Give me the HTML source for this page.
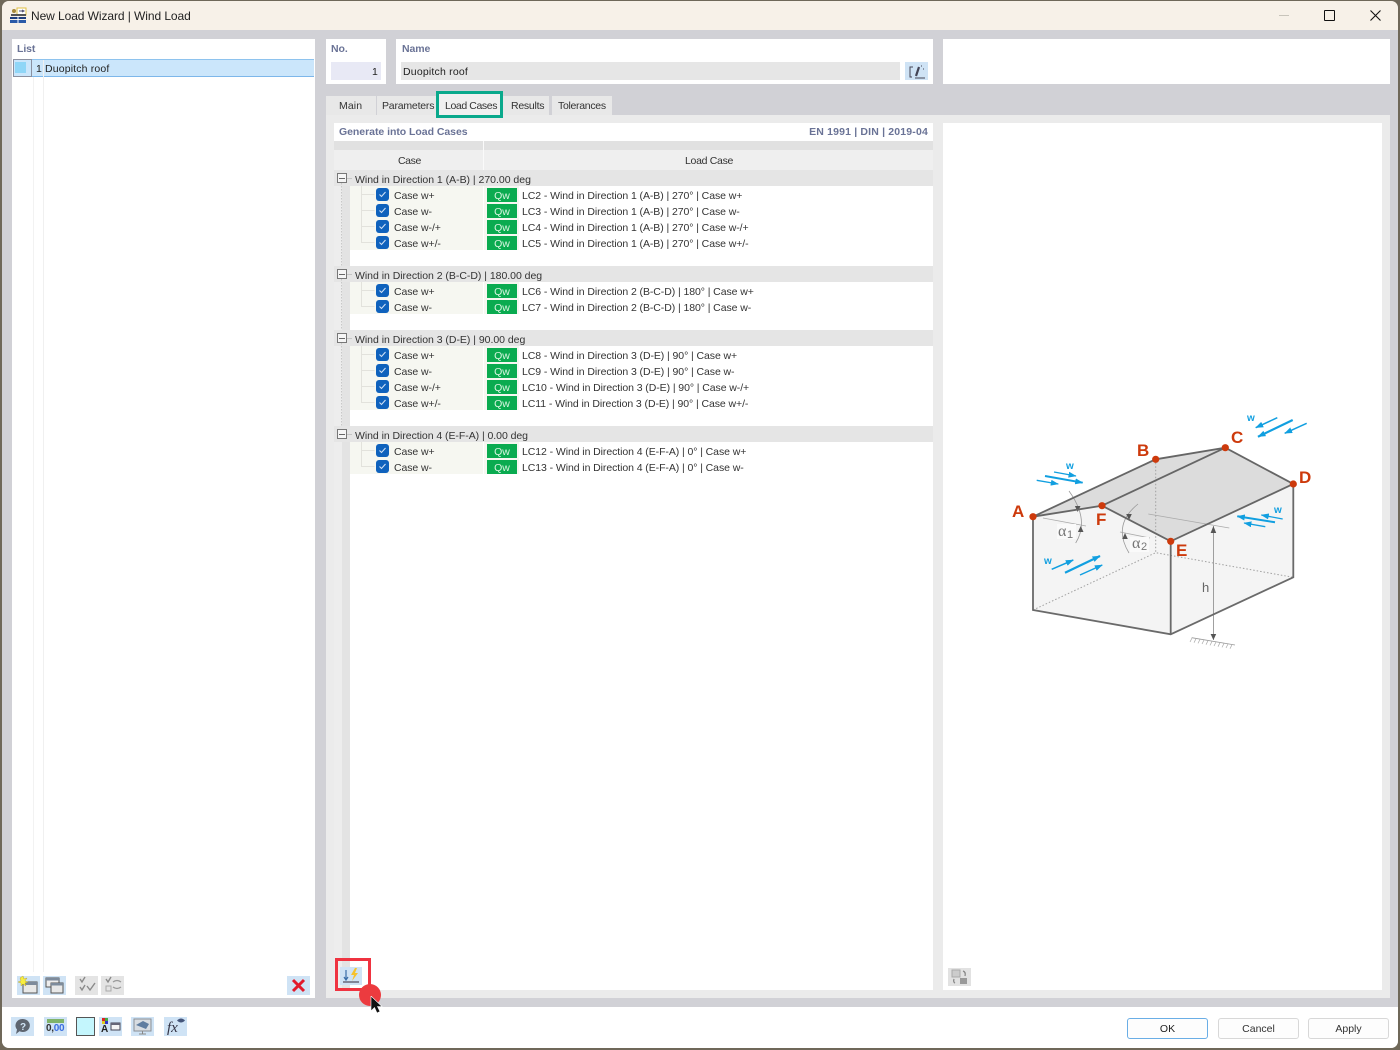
<!DOCTYPE html>
<html><head><meta charset="utf-8"><style>
html,body{margin:0;padding:0;background:#6f6859;}
body{width:1400px;height:1050px;position:relative;overflow:hidden;font-family:"Liberation Sans",sans-serif;font-size:10.5px;color:#333;}
.a{position:absolute;}
.t{position:absolute;white-space:nowrap;line-height:14px;letter-spacing:-.08px;}
.b{font-weight:bold;color:#6a7396;}
.ib{position:absolute;width:23px;height:19px;background:#cfe3f5;}
.ig{position:absolute;width:23px;height:19px;background:#e4e4e4;}
.cb{position:absolute;left:376px;width:13px;height:13.5px;margin-top:-.5px;background:#0f62bd;border-radius:3px;}
.qw{position:absolute;left:487px;width:30px;height:14px;margin-top:-.5px;background:#0aab50;color:#d8f5e0;text-align:center;line-height:16px;font-size:10.5px;}
.rowbg{position:absolute;left:350px;width:133px;background:#f6f7f1;}
.rowbg2{position:absolute;left:484px;width:35px;background:#f6f7f1;}
.gh{position:absolute;left:334px;width:599px;height:16px;background:#e5e5e5;}
.pm{position:absolute;left:337px;width:8px;height:8px;border:1px solid #777;background:#f5f5f5;}
.pm:after{content:"";position:absolute;left:1px;top:3.500px;width:6px;height:1px;background:#666;}
.btn{position:absolute;top:1018px;width:79px;height:19px;border:1px solid #d8d8d8;border-radius:3px;background:#fdfdfd;text-align:center;line-height:21px;font-size:10.5px;}
</style></head><body>
<div class="a" style="left:2px;top:1px;width:1396px;height:1047px;background:#d1d1d6;border-radius:7px;overflow:hidden">
<div class="a" style="left:0;top:0;width:1396px;height:29px;background:#f7f1e8"></div>
<div class="a" style="left:0;top:1006px;width:1396px;height:41px;background:#fff"></div>
</div>
<svg class="a" style="left:10px;top:7px" width="17" height="16" viewBox="0 0 17 16"><rect x="7" y="1" width="9" height="7" fill="#fff" stroke="#e0c040"/><path d="M9 4h5M12 3l2 1-2 1" stroke="#557" fill="none"/><circle cx="4" cy="4" r="2" fill="#a88a3a"/><path d="M1 8h15" stroke="#555" stroke-width="2"/><rect x="0" y="10" width="16" height="2" fill="#1e3f80"/><rect x="0" y="13" width="16" height="3" fill="#2a5aa8"/><path d="M8 9v7" stroke="#fff"/></svg>
<div class="t" style="left:31px;top:9px;font-size:12px;color:#222;letter-spacing:-.08px">New Load Wizard | Wind Load</div>
<div class="a" style="left:1279px;top:15px;width:10px;height:1px;background:#c8c4ba"></div>
<div class="a" style="left:1324px;top:10px;width:9px;height:9px;border:1px solid #111;border-radius:1px"></div>
<svg class="a" style="left:1370px;top:10px" width="11" height="11"><path d="M.5 .5l10 10M10.500 .5l-10 10" stroke="#111" stroke-width="1.100"/></svg>

<!-- List -->
<div class="a" style="left:12px;top:39px;width:303px;height:959px;background:#fff"></div>
<div class="t b" style="left:17px;top:42px">List</div>
<div class="a" style="left:13px;top:59px;width:301px;height:18px;background:#cbe6fb;border-top:1px solid #8ec3ee;border-bottom:1px solid #7db7ea;box-sizing:border-box"></div>
<div class="a" style="left:13px;top:59px;width:19px;height:18px;border:1px solid #8a90a0;box-sizing:border-box"></div>
<div class="a" style="left:15px;top:62px;width:11px;height:11px;background:#8fd6f7"></div>
<div class="a" style="left:33px;top:77px;width:1px;height:895px;background:#f2f2f2"></div>
<div class="a" style="left:43px;top:60px;width:1px;height:912px;background:#f0f0f0"></div>
<div class="t" style="left:36px;top:62px;color:#222">1</div>
<div class="t" style="left:45px;top:62px;color:#222;letter-spacing:.15px">Duopitch roof</div>
<div class="ib" style="left:17px;top:976px"></div>
<svg class="a" style="left:17px;top:975px" width="23" height="20"><rect x="6" y="7" width="14" height="11" fill="#e8e8e8" stroke="#555"/><rect x="6" y="7" width="14" height="3" fill="#7d8b9c"/><path d="M6 1l1 3 3-1-2 3 3 1-3 1 1 3-3-2-2 2 0-3-3-1 3-1-1-3z" fill="#f8ee40" stroke="#b39b20" stroke-width=".4"/></svg>
<div class="ib" style="left:43px;top:976px"></div>
<svg class="a" style="left:43px;top:975px" width="23" height="20"><rect x="3" y="3" width="13" height="9" fill="#eee" stroke="#555"/><rect x="3" y="3" width="13" height="2.500" fill="#7d8b9c"/><rect x="8" y="8" width="12" height="10" fill="#e8e8e8" stroke="#555"/><rect x="8" y="8" width="12" height="2.500" fill="#7d8b9c"/></svg>
<div class="ig" style="left:75px;top:976px"></div>
<svg class="a" style="left:75px;top:975px" width="23" height="20"><path d="M5 4l2 3 3-5M5 12l2 3 3-5M12 11l3 4 5-7" stroke="#8a8a8a" stroke-width="1.400" fill="none"/></svg>
<div class="ig" style="left:101px;top:976px"></div>
<svg class="a" style="left:101px;top:975px" width="23" height="20"><path d="M5 4l2 3 3-5" stroke="#8a8a8a" stroke-width="1.400" fill="none"/><rect x="5" y="11" width="5" height="5" fill="none" stroke="#aaa"/><path d="M12 7q4-3 8 0M20 12q-4 3-8 0" stroke="#999" stroke-width="1.300" fill="none"/></svg>
<div class="ib" style="left:287px;top:976px"></div>
<svg class="a" style="left:287px;top:975px" width="23" height="20"><path d="M6 5l11 11M17 5L6 16" stroke="#e21a2c" stroke-width="3"/></svg>

<!-- No / Name -->
<div class="a" style="left:326px;top:39px;width:60px;height:45px;background:#fff"></div>
<div class="t b" style="left:331px;top:42px">No.</div>
<div class="a" style="left:331px;top:62px;width:50px;height:18px;background:#e8e9f5"></div>
<div class="t" style="left:372px;top:65px;color:#222">1</div>
<div class="a" style="left:396px;top:39px;width:537px;height:45px;background:#fff"></div>
<div class="t b" style="left:402px;top:42px">Name</div>
<div class="a" style="left:401px;top:62px;width:499px;height:18px;background:#e6e6e6"></div>
<div class="t" style="left:403px;top:65px;color:#222;letter-spacing:.2px">Duopitch roof</div>
<div class="a" style="left:905px;top:62px;width:23px;height:18px;background:#cfe3f5"></div>
<svg class="a" style="left:905px;top:62px" width="23" height="18"><path d="M8 5H5v10h2M10 16h10" stroke="#445" fill="none"/><path d="M11 14l3-9" stroke="#445" stroke-width="2.200"/><path d="M16 4h1M18 7h1" stroke="#445"/></svg>
<div class="a" style="left:943px;top:39px;width:447px;height:45px;background:#fff"></div>

<!-- Tabs -->
<div class="a" style="left:326px;top:96px;width:50px;height:19px;background:#e8e8e8"></div>
<div class="t" style="left:339px;top:99px;letter-spacing:.1px">Main</div>
<div class="a" style="left:377px;top:96px;width:59px;height:19px;background:#e8e8e8"></div>
<div class="t" style="left:382px;top:99px;letter-spacing:-.2px">Parameters</div>
<div class="a" style="left:503px;top:96px;width:46px;height:19px;background:#e8e8e8"></div>
<div class="t" style="left:511px;top:99px;letter-spacing:-.25px">Results</div>
<div class="a" style="left:552px;top:96px;width:60px;height:19px;background:#e8e8e8"></div>
<div class="t" style="left:558px;top:99px;letter-spacing:-.3px">Tolerances</div>
<div class="a" style="left:326px;top:115px;width:1064px;height:883px;background:#ebebeb"></div>
<div class="a" style="left:436px;top:91px;width:61px;height:21px;border:3px solid #0aa98c;background:#f0f0f0"></div>
<div class="t" style="left:445px;top:99px;letter-spacing:-.4px">Load Cases</div>

<!-- Panels -->
<div class="a" style="left:334px;top:123px;width:599px;height:867px;background:#fff"></div>
<div class="a" style="left:943px;top:123px;width:439px;height:867px;background:#fff"></div>
<div class="t b" style="left:339px;top:125px;letter-spacing:-.04px">Generate into Load Cases</div>
<div class="t b" style="right:472px;top:125px;letter-spacing:.17px">EN 1991 | DIN | 2019-04</div>
<div class="a" style="left:334px;top:141px;width:599px;height:9px;background:#e1e1e1"></div>
<div class="a" style="left:334px;top:150px;width:599px;height:20px;background:#efefef"></div>
<div class="a" style="left:483px;top:141px;width:1px;height:29px;background:#fafafa"></div>
<div class="t" style="left:398px;top:154px;letter-spacing:-.4px">Case</div>
<div class="t" style="left:685px;top:154px;letter-spacing:-.3px">Load Case</div>
<div class="a" style="left:334px;top:170px;width:8px;height:820px;background:#ededed"></div>
<div class="a" style="left:342px;top:170px;width:8px;height:820px;background:#e3e3e3"></div>

<div class="gh" style="top:170px"></div><div class="gh" style="top:266px"></div><div class="gh" style="top:330px"></div><div class="gh" style="top:426px"></div>
<svg class="a" style="left:334px;top:170px" width="20" height="280"><path d="M7.500 13v83M7.500 109v51M7.500 173v83" stroke="#c8c8c8" stroke-dasharray="1.500 1.500" fill="none"/><path d="M12 8.500h6M12 104.500h6M12 168.500h6M12 264.500h6" stroke="#c4c4c4"/></svg>
<div class="pm" style="top:173px"></div><div class="pm" style="top:269px"></div><div class="pm" style="top:333px"></div><div class="pm" style="top:429px"></div>
<div class="t" style="left:355px;top:173px;letter-spacing:-.02px">Wind in Direction 1 (A-B) | 270.00 deg</div>
<div class="t" style="left:355px;top:269px;letter-spacing:-.03px">Wind in Direction 2 (B-C-D) | 180.00 deg</div>
<div class="t" style="left:355px;top:333px;letter-spacing:-.03px">Wind in Direction 3 (D-E) | 90.00 deg</div>
<div class="t" style="left:355px;top:429px;letter-spacing:-.05px">Wind in Direction 4 (E-F-A) | 0.00 deg</div>

<div class="rowbg" style="top:186px;height:64px"></div><div class="rowbg2" style="top:186px;height:64px"></div>
<div class="rowbg" style="top:282px;height:32px"></div><div class="rowbg2" style="top:282px;height:32px"></div>
<div class="rowbg" style="top:346px;height:64px"></div><div class="rowbg2" style="top:346px;height:64px"></div>
<div class="rowbg" style="top:442px;height:32px"></div><div class="rowbg2" style="top:442px;height:32px"></div>
<svg class="a" style="left:350px;top:180px" width="30" height="300"><path d="M11.500 6v57M11.500 14.500h13M11.500 30.500h13M11.500 46.500h13M11.500 62.500h13M11.500 102v25M11.500 110.500h13M11.500 126.500h13M11.500 166v57M11.500 174.500h13M11.500 190.500h13M11.500 206.500h13M11.500 222.500h13M11.500 262v25M11.500 270.500h13M11.500 286.500h13" stroke="#e2e2dc" fill="none"/></svg>

<div class="cb" style="top:188px"></div><div class="t" style="left:394px;top:189px">Case w+</div><div class="qw" style="top:188px">Qw</div><div class="t" style="left:522px;top:189px">LC2 - Wind in Direction 1 (A-B) | 270° | Case w+</div>
<div class="cb" style="top:204px"></div><div class="t" style="left:394px;top:205px">Case w-</div><div class="qw" style="top:204px">Qw</div><div class="t" style="left:522px;top:205px">LC3 - Wind in Direction 1 (A-B) | 270° | Case w-</div>
<div class="cb" style="top:220px"></div><div class="t" style="left:394px;top:221px">Case w-/+</div><div class="qw" style="top:220px">Qw</div><div class="t" style="left:522px;top:221px">LC4 - Wind in Direction 1 (A-B) | 270° | Case w-/+</div>
<div class="cb" style="top:236px"></div><div class="t" style="left:394px;top:237px">Case w+/-</div><div class="qw" style="top:236px">Qw</div><div class="t" style="left:522px;top:237px">LC5 - Wind in Direction 1 (A-B) | 270° | Case w+/-</div>
<div class="cb" style="top:284px"></div><div class="t" style="left:394px;top:285px">Case w+</div><div class="qw" style="top:284px">Qw</div><div class="t" style="left:522px;top:285px">LC6 - Wind in Direction 2 (B-C-D) | 180° | Case w+</div>
<div class="cb" style="top:300px"></div><div class="t" style="left:394px;top:301px">Case w-</div><div class="qw" style="top:300px">Qw</div><div class="t" style="left:522px;top:301px">LC7 - Wind in Direction 2 (B-C-D) | 180° | Case w-</div>
<div class="cb" style="top:348px"></div><div class="t" style="left:394px;top:349px">Case w+</div><div class="qw" style="top:348px">Qw</div><div class="t" style="left:522px;top:349px">LC8 - Wind in Direction 3 (D-E) | 90° | Case w+</div>
<div class="cb" style="top:364px"></div><div class="t" style="left:394px;top:365px">Case w-</div><div class="qw" style="top:364px">Qw</div><div class="t" style="left:522px;top:365px">LC9 - Wind in Direction 3 (D-E) | 90° | Case w-</div>
<div class="cb" style="top:380px"></div><div class="t" style="left:394px;top:381px">Case w-/+</div><div class="qw" style="top:380px">Qw</div><div class="t" style="left:522px;top:381px">LC10 - Wind in Direction 3 (D-E) | 90° | Case w-/+</div>
<div class="cb" style="top:396px"></div><div class="t" style="left:394px;top:397px">Case w+/-</div><div class="qw" style="top:396px">Qw</div><div class="t" style="left:522px;top:397px">LC11 - Wind in Direction 3 (D-E) | 90° | Case w+/-</div>
<div class="cb" style="top:444px"></div><div class="t" style="left:394px;top:445px">Case w+</div><div class="qw" style="top:444px">Qw</div><div class="t" style="left:522px;top:445px">LC12 - Wind in Direction 4 (E-F-A) | 0° | Case w+</div>
<div class="cb" style="top:460px"></div><div class="t" style="left:394px;top:461px">Case w-</div><div class="qw" style="top:460px">Qw</div><div class="t" style="left:522px;top:461px">LC13 - Wind in Direction 4 (E-F-A) | 0° | Case w-</div>
<svg class="a" style="left:376px;top:188px" width="13" height="290" fill="none" stroke="#cfe0f5" stroke-width="1.100"><path d="M3.500 6.500l2 2 4-4.500M3.500 22.500l2 2 4-4.500M3.500 38.500l2 2 4-4.500M3.500 54.500l2 2 4-4.500M3.500 102.500l2 2 4-4.500M3.500 118.500l2 2 4-4.500M3.500 166.500l2 2 4-4.500M3.500 182.500l2 2 4-4.500M3.500 198.500l2 2 4-4.500M3.500 214.500l2 2 4-4.500M3.500 262.500l2 2 4-4.500M3.500 278.500l2 2 4-4.500"/></svg>

<!-- Diagram -->
<svg class="a" style="left:0;top:0" width="1400" height="1050" font-family="Liberation Sans,sans-serif">
<defs><marker id="ah" markerUnits="userSpaceOnUse" markerWidth="8" markerHeight="6" refX="7.500" refY="3" orient="auto"><path d="M0 0L8 3L0 6z" fill="#119fe0"/></marker></defs>
<path d="M1033 516.700L1102 505.700L1170.700 541.300V634.300L1033 610Z" fill="#f4f4f4"/>
<path d="M1170.700 541.300L1293.300 484V577.300L1170.700 634.300Z" fill="#f4f4f4"/>
<path d="M1033 516.700L1155.700 459.300L1225.300 447.700L1102 505.700Z" fill="#dcdcdc"/>
<path d="M1102 505.700L1225.300 447.700L1293.300 484L1170.700 541.300Z" fill="#dcdcdc"/>
<path d="M1155.700 459.300V552.700M1033 610L1155.700 552.700L1293.300 577.300" stroke="#a0a0a0" stroke-dasharray="1.500 2" fill="none"/>
<path d="M1043 518l43 8M1120 532l30 6M1148.300 514l81 14" stroke="#aaa" fill="none" stroke-width=".8"/>
<rect x="1057" y="524" width="19" height="15" fill="#fafafa"/><rect x="1130" y="537" width="19" height="15" fill="#fafafa"/>
<path d="M1069 491Q1090 520 1075.700 543M1138 504Q1112 525 1129 553" stroke="#999" fill="none" stroke-width=".8"/>
<path d="M1213.400 526V640" stroke="#888" stroke-width=".8"/>
<path d="M1213.400 526l-2.800 7h5.600zM1213.400 640l-2.800-6h5.600zM1077.700 512l-2.800-6h5.600zM1080.700 526l-2.800 6h5.600zM1129 520l-2.800-6h5.600zM1125 533l-2.800 6h5.600z" fill="#555"/>
<path d="M1191.700 637.700L1235 645" stroke="#999" stroke-width=".8"/><path d="M1192 638l-2 4M1196 638.700l-2 4M1200 639.400l-2 4M1204 640l-2 4M1208 640.700l-2 4M1212 641.400l-2 4M1216 642l-2 4M1220 642.700l-2 4M1224 643.400l-2 4M1228 644l-2 4M1232 644.700l-2 4" stroke="#aaa" stroke-width=".7"/>
<path d="M1033 516.700V610L1170.700 634.300L1293.300 577.300V484M1170.700 541.300V634.300" stroke="#6a6a6a" stroke-width="1.800" fill="none"/>
<path d="M1033 516.700L1155.700 459.300L1225.300 447.700L1293.300 484L1170.700 541.300L1102 505.700L1033 516.700M1102 505.700L1225.300 447.700" stroke="#666" stroke-width="1.800" fill="none"/>
<g fill="#cd3a0c"><circle cx="1033" cy="516.700" r="3.600"/><circle cx="1155.700" cy="459.300" r="3.600"/><circle cx="1225.300" cy="447.700" r="3.600"/><circle cx="1293.300" cy="484" r="3.600"/><circle cx="1170.700" cy="541.300" r="3.600"/><circle cx="1102" cy="505.700" r="3.600"/></g>
<g fill="#cd3a0c" font-size="17" font-weight="bold"><text x="1012" y="517">A</text><text x="1137" y="456">B</text><text x="1231" y="443">C</text><text x="1299" y="483">D</text><text x="1176" y="556">E</text><text x="1096" y="525">F</text></g>
<g fill="#777" font-family="Liberation Serif,serif" font-size="16"><text x="1058" y="536">α</text><text x="1132" y="548">α</text></g>
<g fill="#777" font-size="11"><text x="1067" y="538">1</text><text x="1141" y="550">2</text></g>
<text x="1202" y="592" fill="#666" font-size="13">h</text>
<g fill="#119fe0" font-size="10" font-weight="bold"><text x="1066" y="469">w</text><text x="1247" y="421">w</text><text x="1274" y="513">w</text><text x="1044" y="564">w</text></g>
<g stroke="#119fe0" fill="none">
<path stroke-width="1.300" marker-end="url(#ah)" d="M1054 472L1076 476"/>
<path stroke-width="2" marker-end="url(#ah)" d="M1045 476L1082.700 482.700"/>
<path stroke-width="1.300" marker-end="url(#ah)" d="M1036.700 480.300L1058.300 484"/>
<path stroke-width="1.500" marker-end="url(#ah)" d="M1277.300 417.700L1255.700 427.700"/>
<path stroke-width="2.200" marker-end="url(#ah)" d="M1292.700 420L1258 436.700"/>
<path stroke-width="1.500" marker-end="url(#ah)" d="M1306.700 423.300L1284.700 433.300"/>
<path stroke-width="1.300" marker-end="url(#ah)" d="M1282.700 519L1261.300 515"/>
<path stroke-width="2" marker-end="url(#ah)" d="M1275 522.300L1237.300 516.300"/>
<path stroke-width="1.300" marker-end="url(#ah)" d="M1265.300 526.700L1244 523"/>
<path stroke-width="1.500" marker-end="url(#ah)" d="M1051.700 569.300L1073.300 560"/>
<path stroke-width="2.200" marker-end="url(#ah)" d="M1065 572.700L1100 556"/>
<path stroke-width="1.500" marker-end="url(#ah)" d="M1080 575L1102.300 565"/>
</g>
</svg>

<div class="a" style="left:948px;top:968px;width:23px;height:18px;background:#e2e2e2"></div>
<svg class="a" style="left:948px;top:968px" width="23" height="18"><rect x="4" y="2" width="8" height="7" fill="#ccc" stroke="#aaa"/><rect x="12" y="10" width="7" height="6" fill="#999"/><path d="M15 3q3 1 2 5M7 15q-2-1-1-4" stroke="#888" fill="none" stroke-width="1.300"/></svg>

<!-- Red highlight + icon -->
<div class="a" style="left:335px;top:958px;width:36px;height:33px;border:3px solid #ef3340;box-sizing:border-box"></div>
<div class="a" style="left:340px;top:967px;width:22px;height:18px;background:#cfe3f5"></div>
<svg class="a" style="left:340px;top:967px" width="22" height="18"><path d="M6 3v9M4 10l2 3 2-3" stroke="#3a6ea8" stroke-width="1.200" fill="none"/><path d="M3 15h16" stroke="#556" stroke-width="1.300"/><path d="M15 1l-4 7h3l-2 6 6-8h-3l2-5z" fill="#f6c22c"/></svg>
<div class="a" style="left:359px;top:984px;width:22px;height:22px;border-radius:50%;background:#ec3b3f"></div>
<svg class="a" style="left:370px;top:996px" width="13" height="20"><path d="M1 0v15l3.500-3.500 2.500 5.500 3-1.500-2.500-5h4.500z" fill="#111" stroke="#fff" stroke-width=".6"/></svg>

<!-- Bottom -->
<div class="ib" style="left:11px;top:1017px"></div>
<svg class="a" style="left:11px;top:1017px" width="23" height="19"><path d="M12 2a7 6.500 0 1 1-3.500 12.200L5 17l1-4.500A7 6.500 0 0 1 12 2z" fill="#5e6570"/><text x="9" y="13" font-size="10" font-weight="bold" fill="#cfe3f5" font-family="Liberation Sans">?</text></svg>
<div class="ib" style="left:44px;top:1017px"></div>
<div class="a" style="left:47px;top:1019px;width:17px;height:4px;background:#7fb36a"></div>
<div class="t" style="left:46px;top:1022px;font-size:10px;font-weight:bold;color:#333;letter-spacing:-.3px">0,<span style="color:#3a6ee0">00</span></div>
<div class="a" style="left:76px;top:1017px;width:17px;height:17px;background:#c4f6fd;border:1px solid #555"></div>
<div class="ib" style="left:99px;top:1017px"></div>
<svg class="a" style="left:99px;top:1017px" width="23" height="19"><rect x="3" y="1" width="3" height="3" fill="#d22"/><rect x="6" y="1" width="3" height="3" fill="#4a4"/><rect x="3" y="4" width="3" height="3" fill="#dc2"/><rect x="6" y="4" width="3" height="3" fill="#33c"/><text x="2" y="15" font-size="10" font-weight="bold" fill="#222" font-family="Liberation Sans">A</text><rect x="12" y="6" width="9" height="7" fill="#f5f5f5" stroke="#445"/><rect x="12" y="6" width="9" height="2" fill="#667"/></svg>
<div class="ib" style="left:131px;top:1017px"></div>
<svg class="a" style="left:131px;top:1017px" width="23" height="19"><rect x="3" y="2" width="17" height="12" fill="#d8dde2" stroke="#8a8f95"/><path d="M5 8l7-4 6 3-3 5z" fill="#5f7da0"/><path d="M11.500 14v3M8 17h7" stroke="#888"/></svg>
<div class="ib" style="left:164px;top:1017px"></div>
<div class="t" style="left:167px;top:1021px;font-family:'Liberation Serif',serif;font-style:italic;font-size:15px;color:#334">fx</div>
<svg class="a" style="left:176px;top:1017px" width="10" height="7"><path d="M1 3.500q4-4 8 0q-4 4-8 0z" fill="#44557a"/></svg>

<div class="btn" style="left:1127px;border-color:#6aaee6;color:#222">OK</div>
<div class="btn" style="left:1218px">Cancel</div>
<div class="btn" style="left:1308px">Apply</div>
</body></html>
